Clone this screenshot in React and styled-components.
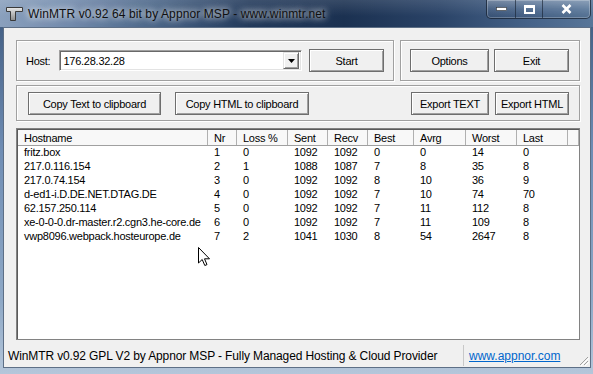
import styled, { createGlobalStyle } from "styled-components";

const GlobalStyle = createGlobalStyle`
  html, body {
    margin: 0;
    padding: 0;
    background: #fff;
  }
  body {
    width: 593px;
    height: 374px;
    overflow: hidden;
  }
`;

const Window = styled.div`
  width: 593px;
  height: 374px;
  box-sizing: border-box;
  display: flex;
  flex-direction: column;
  padding: 0 2px 6px 3px;
  background: linear-gradient(to bottom, #3c587d 0%, #6f8db4 40%, #8ea8c6 80%, #b4c6da 100%);
  font-family: "Liberation Sans", Arial, sans-serif;
`;

const TitleBar = styled.div`
  height: 27px;
  margin: 0 -2px 0 -3px;
  display: flex;
  align-items: flex-start;
  background:
    linear-gradient(to bottom, rgba(255, 255, 255, 0.12), rgba(255, 255, 255, 0) 60%),
    linear-gradient(
      to right,
      #8aa0bd 0%,
      #7089ab 12%,
      #4a6588 26%,
      #22395a 42%,
      #1b3151 58%,
      #2a4367 74%,
      #47648a 90%,
      #587699 100%
    );
`;

const AppIcon = styled.svg`
  margin: 7px 0 0 6px;
  flex: none;
`;

const Title = styled.div`
  margin: 6px 0 0 5px;
  font-size: 12px;
  letter-spacing: 0.1px;
  line-height: 16px;
  color: #101010;
  white-space: nowrap;
  text-shadow: 0 0 6px rgba(255, 255, 255, 0.9), 0 0 10px rgba(255, 255, 255, 0.7);
  flex: 1;
`;

const CaptionGroup = styled.div`
  display: flex;
  height: 18px;
  margin-right: 2px;
  border: 1px solid rgba(20, 30, 45, 0.7);
  border-top: none;
  border-radius: 0 0 5px 5px;
  box-shadow: inset 0 0 0 1px rgba(255, 255, 255, 0.25);
  overflow: hidden;
`;

const Caption = styled.div`
  width: ${(props) => props.$w}px;
  display: flex;
  align-items: center;
  justify-content: center;
  background: linear-gradient(to bottom, rgba(255, 255, 255, 0.22), rgba(255, 255, 255, 0.04) 50%, rgba(0, 0, 0, 0.05));
  & + & {
    border-left: 1px solid rgba(20, 30, 45, 0.6);
  }
`;

const Client = styled.div`
  flex: 1;
  display: flex;
  flex-direction: column;
  background: #f0f0f0;
  border: 1px solid #5d6f86;
  color: #000;
`;

const Body = styled.div`
  flex: 1;
  display: flex;
  flex-direction: column;
  padding: 12px 9px 0 12px;
`;

const TopRow = styled.div`
  display: flex;
  gap: 6px;
`;

const Group = styled.div`
  box-sizing: border-box;
  width: ${(props) => props.$w || 564}px;
  height: ${(props) => props.$h}px;
  display: flex;
  align-items: center;
  padding: ${(props) => props.$pad || "0 9px"};
  margin-top: ${(props) => props.$mt || 0}px;
  border: 1px solid #a0a0a0;
  box-shadow: inset 1px 1px 0 #fff, 1px 1px 0 #fff;
`;

const Label = styled.span`
  font-size: 11px;
  letter-spacing: -0.25px;
  margin-right: 9px;
`;

const Combo = styled.div`
  box-sizing: border-box;
  width: 245px;
  height: 21px;
  display: flex;
  align-items: center;
  background: #fff;
  border: 1px solid;
  border-color: #a0a0a0 #fff #fff #a0a0a0;
  box-shadow: inset 1px 1px 0 #696969, inset -1px -1px 0 #e3e3e3;
  padding: 2px 2px 2px 3px;
  margin-right: 7px;
`;

const ComboText = styled.span`
  flex: 1;
  font-size: 11px;
  letter-spacing: -0.25px;
`;

const DropButton = styled.div`
  box-sizing: border-box;
  width: 16px;
  height: 17px;
  display: flex;
  align-items: center;
  justify-content: center;
  background: #f0f0f0;
  border: 1px solid;
  border-color: #e3e3e3 #696969 #696969 #e3e3e3;
  box-shadow: inset 1px 1px 0 #fff, inset -1px -1px 0 #a0a0a0;
`;

const Button = styled.div`
  box-sizing: border-box;
  width: ${(props) => props.$w}px;
  height: 23px;
  flex: none;
  display: flex;
  align-items: center;
  justify-content: center;
  margin-left: ${(props) => props.$ml || 0}px;
  background: #f0f0f0;
  border: 1px solid #6e6e6e;
  box-shadow: inset 1px 1px 0 #fff, inset -1px -1px 0 #a0a0a0;
  font-size: 11px;
  letter-spacing: -0.25px;
  white-space: nowrap;
`;

const Spacer = styled.div`
  flex: 1;
`;

const ListView = styled.div`
  position: relative;
  box-sizing: border-box;
  width: 564px;
  flex: 1;
  margin: 7px 0 3px;
  background: #fff;
  border: 1px solid #828282;
  box-shadow: inset 1px 1px 0 #5a5a5a;
  padding: 1px 0 0 1px;
  font-size: 11px;
  letter-spacing: -0.25px;
`;

const columns = "190px 29px 51px 40px 40px 46px 52px 51px 51px 1fr";

const HeaderRow = styled.div`
  display: grid;
  grid-template-columns: ${columns};
  height: 15px;
  background: #f8f8f8;
  border-bottom: 1px solid #a0a0a0;
`;

const HeaderCell = styled.div`
  padding-left: 6px;
  line-height: 16px;
  border-right: 1px solid #b0b0b0;
  white-space: nowrap;
  overflow: hidden;
`;

const Row = styled.div`
  display: grid;
  grid-template-columns: ${columns};
  height: 14px;
`;

const Cell = styled.div`
  padding-left: 6px;
  line-height: 13px;
  white-space: nowrap;
  overflow: hidden;
`;

const Cursor = styled.svg`
  position: absolute;
  left: 181px;
  top: 118px;
`;

const StatusBar = styled.div`
  height: 24px;
  display: flex;
  align-items: stretch;
  font-size: 12px;
`;

const Pane = styled.div`
  box-sizing: border-box;
  width: ${(props) => props.$w}px;
  display: flex;
  align-items: center;
  padding-left: ${(props) => props.$pl}px;
  margin: 2px 0 1px;
  white-space: nowrap;
  letter-spacing: ${(props) => props.$ls || 0}px;
  & + & {
    border-left: 1px solid #c8c8c8;
  }
`;

const Link = styled.span`
  color: #0066cc;
  text-decoration: underline;
`;

const Grip = styled.svg`
  align-self: flex-end;
  margin: 0 1px 1px auto;
`;

const headers = ["Hostname", "Nr", "Loss %", "Sent", "Recv", "Best", "Avrg", "Worst", "Last"];

const hops = [
  ["fritz.box", 1, 0, 1092, 1092, 0, 0, 14, 0],
  ["217.0.116.154", 2, 1, 1088, 1087, 7, 8, 35, 8],
  ["217.0.74.154", 3, 0, 1092, 1092, 8, 10, 36, 9],
  ["d-ed1-i.D.DE.NET.DTAG.DE", 4, 0, 1092, 1092, 7, 10, 74, 70],
  ["62.157.250.114", 5, 0, 1092, 1092, 7, 11, 112, 8],
  ["xe-0-0-0.dr-master.r2.cgn3.he-core.de", 6, 0, 1092, 1092, 7, 11, 109, 8],
  ["vwp8096.webpack.hosteurope.de", 7, 2, 1041, 1030, 8, 54, 2647, 8],
];

export default function App() {
  return (
    <>
      <GlobalStyle />
      <Window>
        <TitleBar>
          <AppIcon width="17" height="14" viewBox="0 0 17 14">
            <defs>
              <linearGradient id="metal" x1="0" y1="0" x2="0" y2="1">
                <stop offset="0" stopColor="#e8e8e8" />
                <stop offset="1" stopColor="#8a8a8a" />
              </linearGradient>
            </defs>
            <path d="M0.5 0.5 H16.5 V4.5 H9.5 V13.5 H4.5 V4.5 H0.5 Z" fill="url(#metal)" stroke="#3a3a3a" />
          </AppIcon>
          <Title>WinMTR v0.92 64 bit by Appnor MSP - www.winmtr.net</Title>
          <CaptionGroup>
            <Caption $w={28}>
              <svg width="11" height="4" viewBox="0 0 11 4">
                <rect x="0.5" y="0.5" width="10" height="3" fill="#fff" stroke="#333" strokeWidth="0.6" />
              </svg>
            </Caption>
            <Caption $w={26}>
              <svg width="11" height="9" viewBox="0 0 11 9">
                <rect x="1" y="1" width="9" height="7" fill="none" stroke="#fff" strokeWidth="2" />
                <rect x="0" y="0" width="11" height="3" fill="#fff" />
              </svg>
            </Caption>
            <Caption $w={47}>
              <svg width="11" height="10" viewBox="0 0 11 10">
                <path d="M1.5 1 L9.5 9 M9.5 1 L1.5 9" stroke="#fff" strokeWidth="2.6" />
              </svg>
            </Caption>
          </CaptionGroup>
        </TitleBar>
        <Client>
          <Body>
            <TopRow>
              <Group $w={378} $h={41}>
                <Label>Host:</Label>
                <Combo>
                  <ComboText>176.28.32.28</ComboText>
                  <DropButton>
                    <svg width="7" height="4" viewBox="0 0 7 4">
                      <path d="M0 0 H7 L3.5 4 Z" fill="#000" />
                    </svg>
                  </DropButton>
                </Combo>
                <Button $w={75}>Start</Button>
              </Group>
              <Group $w={180} $h={41}>
                <Button $w={79}>Options</Button>
                <Button $w={75} $ml={5}>Exit</Button>
              </Group>
            </TopRow>
            <Group $h={36} $mt={4} $pad="1px 10px 0 11px">
              <Button $w={133}>Copy Text to clipboard</Button>
              <Button $w={134} $ml={14}>Copy HTML to clipboard</Button>
              <Spacer />
              <Button $w={78}>Export TEXT</Button>
              <Button $w={74} $ml={6}>Export HTML</Button>
            </Group>
            <ListView>
              <HeaderRow>
                {headers.map((h) => (
                  <HeaderCell key={h}>{h}</HeaderCell>
                ))}
                <HeaderCell />
              </HeaderRow>
              {hops.map((hop) => (
                <Row key={hop[1]}>
                  {hop.map((value, i) => (
                    <Cell key={i}>{value}</Cell>
                  ))}
                </Row>
              ))}
              <Cursor width="13" height="20" viewBox="0 0 13 20">
                <path
                  d="M0.5 0.5 V16 L4.2 12.5 L6.8 18.5 L9 17.6 L6.5 11.8 H11.5 Z"
                  fill="#fff"
                  stroke="#000"
                  strokeWidth="1"
                  strokeLinejoin="round"
                />
              </Cursor>
            </ListView>
          </Body>
          <StatusBar>
            <Pane $w={459} $pl={4} $ls={-0.12}>
              WinMTR v0.92 GPL V2 by Appnor MSP - Fully Managed Hosting &amp; Cloud Provider
            </Pane>
            <Pane $w={107} $pl={5}>
              <Link>www.appnor.com</Link>
            </Pane>
            <Grip width="12" height="12" viewBox="0 0 12 12">
              <path d="M11 3 L3 11 M11 7 L7 11" stroke="#a0a0a0" strokeWidth="1" />
              <path d="M12 4 L4 12 M12 8 L8 12" stroke="#fff" strokeWidth="1" />
            </Grip>
          </StatusBar>
        </Client>
      </Window>
    </>
  );
}
